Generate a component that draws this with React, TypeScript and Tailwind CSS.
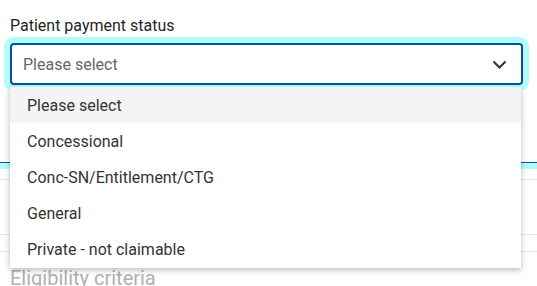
const options = [
  "Please select",
  "Concessional",
  "Conc-SN/Entitlement/CTG",
  "General",
  "Private - not claimable",
];

export default function App() {
  return (
    <div className="relative h-[286px] w-[537px] overflow-hidden bg-white font-['Roboto',sans-serif]">
      <div className="flex flex-col">
        <label className="mx-[10px] mt-[16px] h-[20px] text-[16px] leading-[20px] text-[#1f1f1f]">
          Patient payment status
        </label>
        <div className="mx-[14px] ml-[10px] mt-[7px] flex h-[42px] items-center justify-between rounded-[4px] border-2 border-[#00529b] bg-white pl-[11px] pr-[14px] shadow-[0_0_0_6px_#b3fcfc]">
          <span className="pt-[2px] text-[16px] text-[#666]">Please select</span>
          <svg width="15" height="9" viewBox="0 0 15 9" fill="none">
            <polyline points="1.5,1.5 7.5,7.5 13.5,1.5" stroke="#333" strokeWidth="2" />
          </svg>
        </div>

        <div className="mt-[77px] h-px bg-[#0058a8]" />
        <div className="h-[6px] bg-[#b3fcfc]" />
        <div className="mt-[10px] h-px bg-[#e6e6e6]" />
        <div className="mt-[54px] h-px bg-[#e6e6e6]" />
        <div className="mt-[16px] h-px bg-[#e6e6e6]" />
        <h3 className="mx-[10px] mt-[13px] text-[20px] leading-[26px] text-[#b0b0b0]">
          Eligibility criteria
        </h3>
      </div>

      <ul className="absolute left-[10px] top-[87px] w-[511px] bg-white shadow-[0_2px_6px_rgba(0,0,0,0.28)]">
        {options.map((o, i) => (
          <li
            key={o}
            className={`flex h-[36px] items-center pl-[17px] pt-[2px] text-[16px] text-[#333] ${
              i === 0 ? "bg-[#f4f4f4]" : ""
            }`}
          >
            {o}
          </li>
        ))}
        <li className="h-px" />
      </ul>
    </div>
  );
}
